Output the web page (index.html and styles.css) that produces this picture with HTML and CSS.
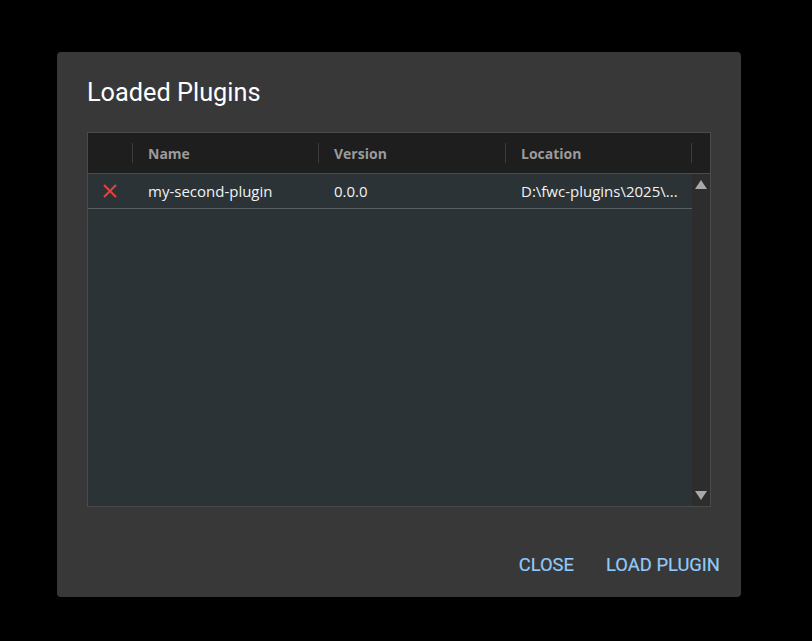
FILE: index.html
```html
<!DOCTYPE html>
<html>
<head>
<meta charset="utf-8">
<link rel="stylesheet" href="styles.css">
</head>
<body>
<div class="backdrop">
  <div class="dialog">
    <h2 class="title">Loaded Plugins</h2>
    <div class="grid">
      <div class="head">
        <div class="hcell c0"></div>
        <div class="hcell c1">Name</div>
        <div class="hcell c2">Version</div>
        <div class="hcell c3">Location</div>
        <div class="hcell c4"></div>
      </div>
      <div class="body">
        <div class="rows">
          <div class="row">
            <div class="cell c0">
              <svg width="14" height="14" viewBox="0 0 14 14"><path d="M1 1L13 13M13 1L1 13" stroke="#e8413a" stroke-width="2" fill="none"/></svg>
            </div>
            <div class="cell c1">my-second-plugin</div>
            <div class="cell c2">0.0.0</div>
            <div class="cell c3">D:\fwc-plugins\2025\...</div>
          </div>
        </div>
        <div class="scroll">
          <div class="arrow up"></div>
          <div class="arrow down"></div>
        </div>
      </div>
    </div>
    <div class="actions">
      <button class="btn">CLOSE</button>
      <button class="btn">LOAD PLUGIN</button>
    </div>
  </div>
</div>
</body>
</html>
```
FILE: styles.css
```css
html, body { margin: 0; padding: 0; background: #000; }
.backdrop { width: 812px; height: 641px; padding-top: 52px; padding-left: 57px; box-sizing: border-box; }
.dialog {
  width: 684px; height: 545px; background: #383838; border-radius: 4px;
  box-sizing: border-box; padding: 0 30px 0 30px; display: flex; flex-direction: column;
}
.title {
  margin: 0; padding: 25px 0 0 0; height: 80px; box-sizing: border-box;
  font-family: Roboto, sans-serif; font-weight: 400; font-size: 25.3px; line-height: 32px;
  color: #fff; letter-spacing: 0;
}
.grid {
  width: 624px; height: 375px; border: 1px solid #4a4a4a; box-sizing: border-box;
  display: flex; flex-direction: column; font-family: "Open Sans", sans-serif; font-size: 14px;
}
.head { display: flex; height: 41px; background: #1e1e1e; border-bottom: 1px solid #4a4a4a; box-sizing: border-box; }
.hcell {
  position: relative; display: flex; align-items: center; padding-left: 15px; box-sizing: border-box;
  color: #9b9b9b; font-weight: 700;
}
.hcell::after { content: ""; position: absolute; right: 0; top: 10px; height: 20px; width: 1px; background: #3d3d3d; }
.hcell.c4::after { display: none; }
.c0 { width: 45px; padding-left: 0; }
.c1 { width: 186px; }
.c2 { width: 187px; }
.c3 { width: 186px; }
.c4 { flex: 1; }
.body { flex: 1; display: flex; background: #2b3336; }
.rows { flex: 1; }
.row { display: flex; height: 35px; border-bottom: 1px solid #5a5e60; box-sizing: border-box; color: #f2f2f2; font-size: 15px; }
.cell { display: flex; align-items: center; padding-left: 15px; box-sizing: border-box; }
.cell.c0 { padding-left: 15px; }
.scroll { width: 19px; background: #2d2d2d; position: relative; }
.arrow { position: absolute; left: 3px; width: 0; height: 0; border-left: 6.5px solid transparent; border-right: 6.5px solid transparent; }
.arrow.up { top: 6px; border-bottom: 9px solid #a9a9a9; }
.arrow.down { bottom: 6px; border-top: 9px solid #a9a9a9; }
.actions { display: flex; justify-content: flex-end; gap: 8px; padding-top: 40px; margin-right: -21px; }
.btn {
  background: none; border: none; color: #90caf9; font-family: Roboto, sans-serif; font-weight: 400;
  font-size: 18.4px; letter-spacing: 0; padding: 6px 12px; line-height: 24px; cursor: pointer;
  -webkit-text-stroke: 0.2px #90caf9;
}
```
